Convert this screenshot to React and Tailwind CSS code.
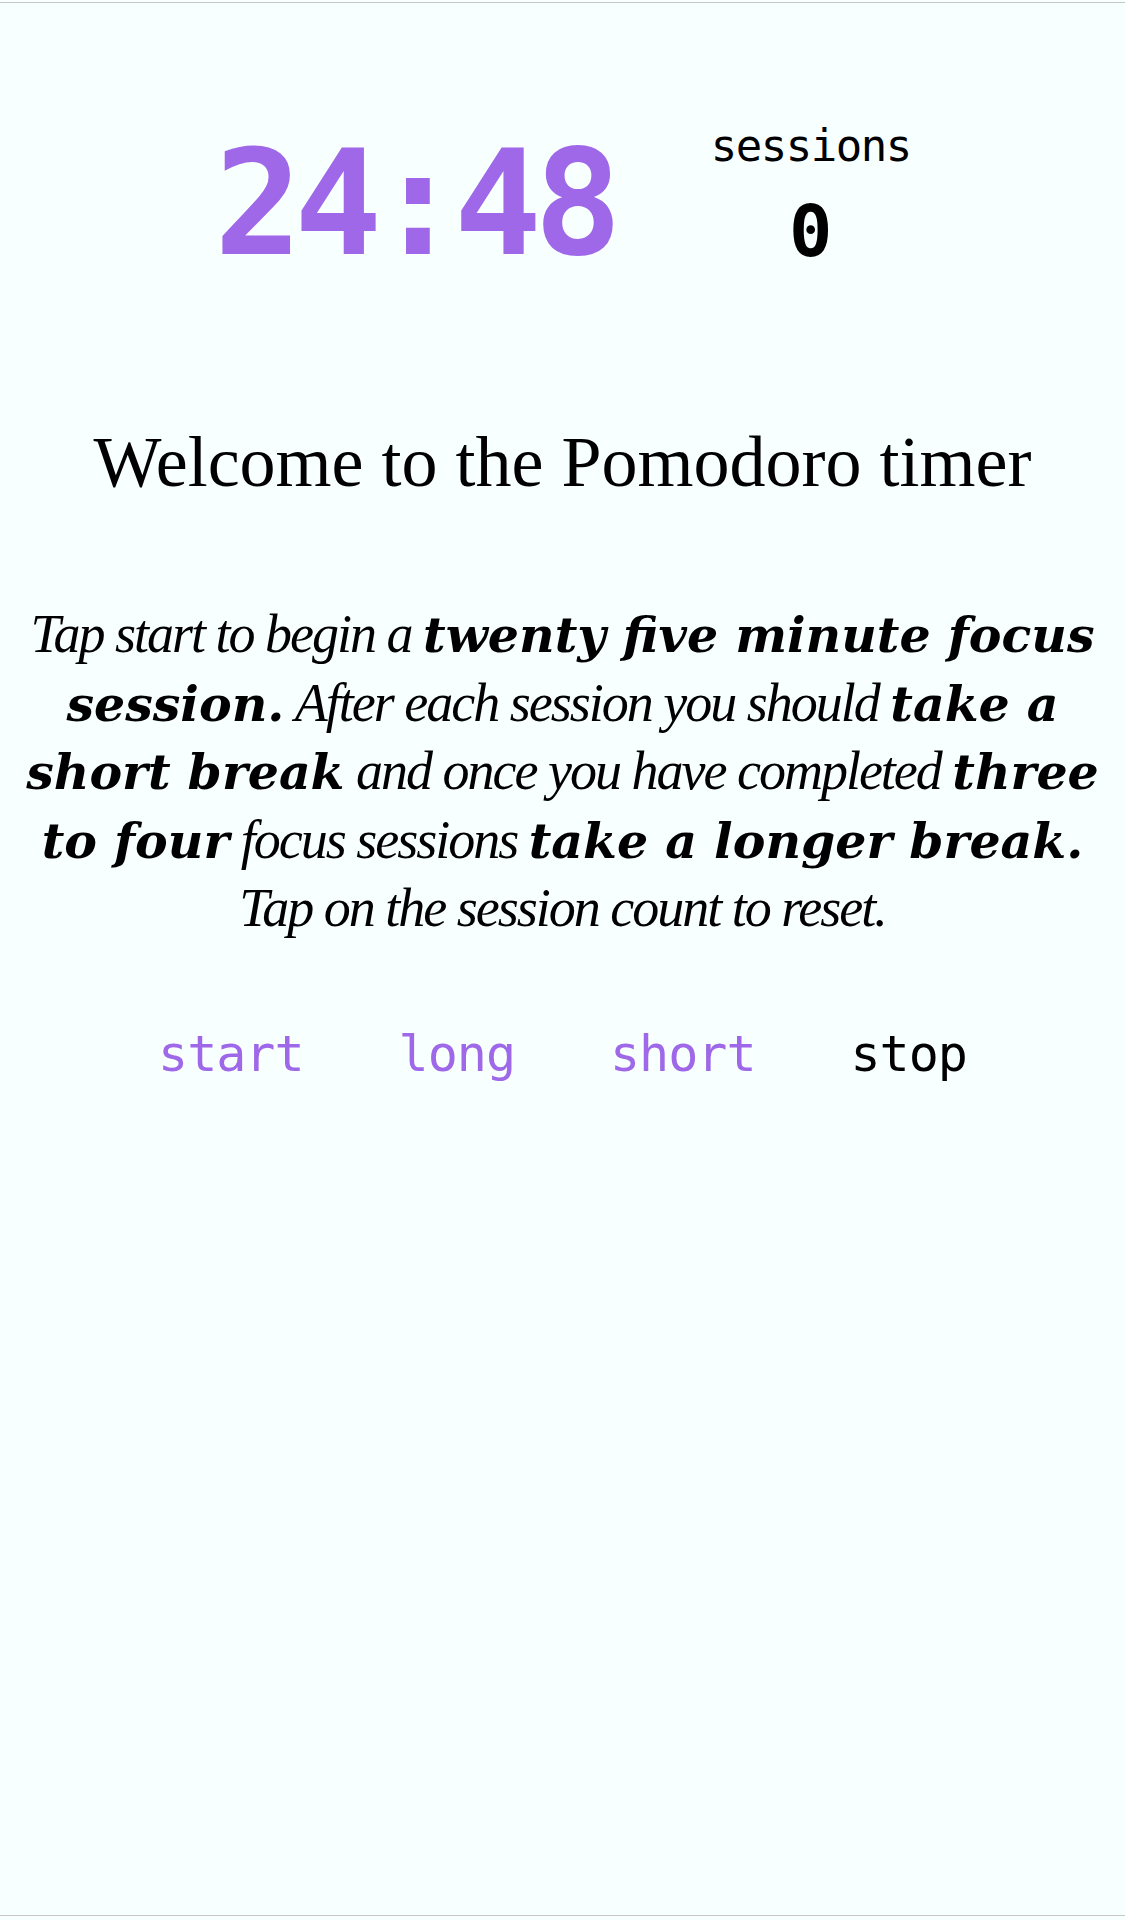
import React from "react";

function B({ children }) {
  return (
    <b className="text-[49px] font-bold leading-none font-['DejaVu_Serif',serif]">{children}</b>
  );
}

function I({ children }) {
  return <span className="tracking-[-2px]">{children}</span>;
}

export default function App() {
  return (
    <div className="h-[1920px] w-full bg-[#f8ffff] pt-[2px]">
      <div className="flex h-[1914px] flex-col items-center border-y border-[#c8c8c8] bg-[#f8ffff] pt-[121px] text-black">
        {/* timer row */}
        <div className="flex items-start justify-center gap-[97px]">
          <div className="mt-[6px] text-[146px] font-bold leading-none tracking-[-8px] text-[#9e68e8] font-['DejaVu_Sans_Mono',monospace]">
            24:48
          </div>
          <div className="flex flex-col items-center font-['DejaVu_Sans_Mono',monospace]">
            <div className="text-[44px] leading-none tracking-[-1.5px]">sessions</div>
            <button className="mt-[27px] cursor-pointer text-[72px] font-bold leading-none">0</button>
          </div>
        </div>

        <h1 className="mt-[150px] text-center text-[72px] font-normal leading-none font-['Liberation_Serif',serif]">
          Welcome to the Pomodoro timer
        </h1>

        <p className="mt-[102px] w-full whitespace-nowrap text-center text-[54px] italic leading-[68.5px] font-['Liberation_Serif',serif]">
          <I>Tap start to begin a </I>
          <B>twenty five minute focus</B>
          <br />
          <B>session.</B>
          <I> After each session you should </I>
          <B>take a</B>
          <br />
          <B>short break</B>
          <I> and once you have completed </I>
          <B>three</B>
          <br />
          <B>to four</B>
          <I> focus sessions </I>
          <B>take a longer break.</B>
          <br />
          <I>Tap on the session count to reset.</I>
        </p>

        <div className="mt-[86px] flex items-start justify-center gap-[95px] text-[50px] leading-none tracking-[-1px] font-['DejaVu_Sans_Mono',monospace]">
          <button className="cursor-pointer leading-none text-[#9e68e8]">start</button>
          <button className="cursor-pointer leading-none text-[#9e68e8]">long</button>
          <button className="cursor-pointer leading-none text-[#9e68e8]">short</button>
          <button className="cursor-pointer leading-none text-black">stop</button>
        </div>
      </div>
    </div>
  );
}
